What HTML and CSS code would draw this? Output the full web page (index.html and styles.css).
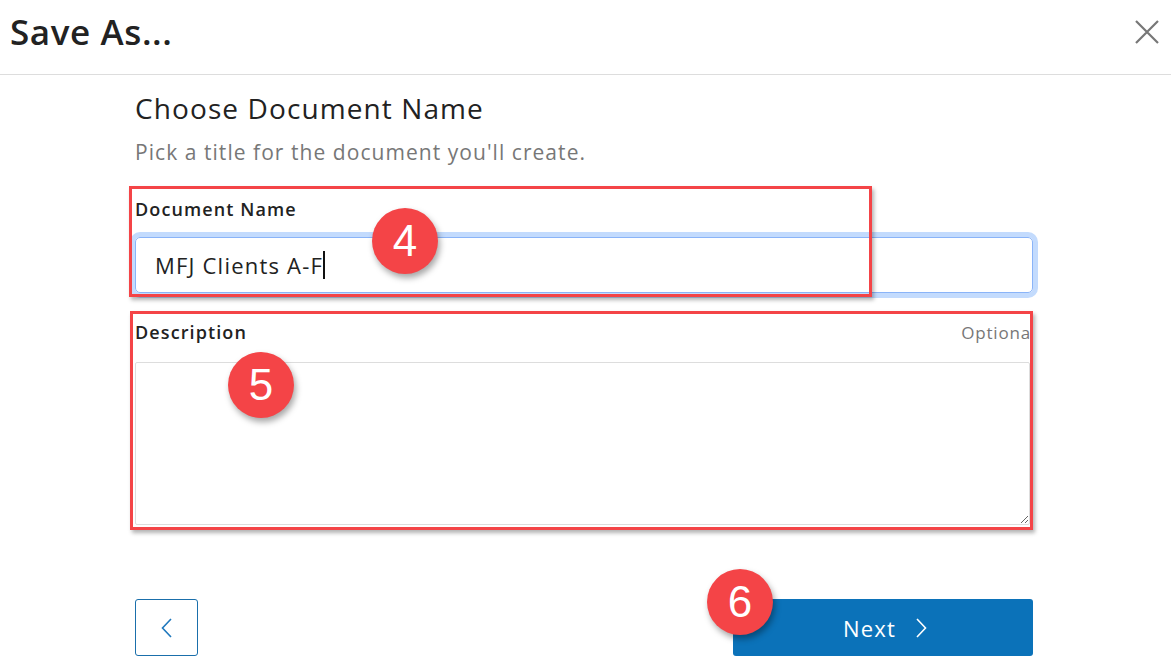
FILE: index.html
```html
<!DOCTYPE html>
<html>
<head>
  <title>Save As...</title>
  <link rel="stylesheet" href="styles.css">
</head>
<body>
  <div class="dialog">
    <div class="dialog-header">
      <h1>Save As...</h1>
      <button class="close-btn" aria-label="Close">
        <svg width="24" height="24" viewBox="0 0 24 24"><path d="M1 1 L23 23 M23 1 L1 23" stroke="#777" stroke-width="2.2" fill="none"/></svg>
      </button>
    </div>

    <div class="dialog-body">
      <h2>Choose Document Name</h2>
      <p class="subtitle">Pick a title for the document you'll create.</p>

      <div class="form-group">
        <label class="field-label">Document Name</label>
        <div class="text-input focused">MFJ Clients A-F<span class="caret"></span></div>
      </div>

      <div class="form-group desc-group">
        <div class="label-row">
          <label class="field-label">Description</label>
          <span class="optional">Optional</span>
        </div>
        <textarea class="text-area"></textarea>
      </div>

      <div class="actions">
        <button class="back-btn" aria-label="Back">
          <svg width="12" height="20" viewBox="0 0 12 20"><path d="M10 1 L1.5 10 L10 19" stroke="#1f78bd" stroke-width="1.6" fill="none"/></svg>
        </button>
        <button class="next-btn">Next
          <svg width="12" height="20" viewBox="0 0 12 20"><path d="M2 1 L10.5 10 L2 19" stroke="#fff" stroke-width="1.6" fill="none"/></svg>
        </button>
      </div>
    </div>
  </div>

  <!-- tutorial annotations -->
  <div class="mark mark-name"></div>
  <div class="mark mark-desc"></div>
  <div class="badge badge-4">4</div>
  <div class="badge badge-5">5</div>
  <div class="badge badge-6">6</div>
</body>
</html>
```

FILE: styles.css
```css
body {
  margin: 0;
  font-family: "Open Sans", sans-serif;
  color: #222;
  background-color: #fff;
}

.dialog-header {
  height: 75px;
  box-sizing: border-box;
  padding: 12px 12px 0 10px;
  border-bottom: 1px solid #ddd;
  display: flex;
  justify-content: space-between;
  align-items: flex-start;
}

.dialog-header h1 {
  margin: 0;
  font-size: 35px;
  line-height: 40px;
  font-weight: 600;
  letter-spacing: 0.6px;
  color: #222;
}

.close-btn {
  margin-top: 8px;
  padding: 0;
  border: none;
  background: none;
  display: flex;
}

.dialog-body {
  margin-left: 135px;
  width: 898px;
  padding-top: 16px;
}

.dialog-body h2 {
  margin: 0;
  font-size: 28px;
  line-height: 34px;
  font-weight: 500;
  letter-spacing: 1.1px;
  color: #222;
}

.subtitle {
  margin: 13px 0 0;
  font-size: 21px;
  line-height: 28px;
  letter-spacing: 1.05px;
  color: #777;
}

.form-group {
  margin-top: 32px;
}

.field-label {
  display: block;
  font-size: 18px;
  line-height: 22px;
  font-weight: 600;
  letter-spacing: 1.1px;
  color: #222;
}

.text-input {
  margin-top: 17px;
  height: 56px;
  box-sizing: border-box;
  padding-left: 19px;
  border: 1px solid #ccc;
  border-radius: 5px;
  display: flex;
  align-items: center;
  font-size: 22px;
  letter-spacing: 1.2px;
  color: #222;
}

.text-input.focused {
  border-color: #8ab4f8;
  box-shadow: 0 0 0 5px #c3dbfd;
}

.caret {
  display: inline-block;
  width: 2px;
  height: 28px;
  background-color: #111;
}

.desc-group {
  margin-top: 28px;
}

.label-row {
  display: flex;
  justify-content: space-between;
  align-items: baseline;
  width: 895px;
  overflow: hidden;
}

.optional {
  font-size: 17px;
  letter-spacing: 0.8px;
  color: #777;
  margin-right: -6px;
}

.text-area {
  display: block;
  margin-top: 18px;
  width: 895px;
  height: 163px;
  box-sizing: border-box;
  border: 1px solid #ddd;
  border-radius: 2px;
  font-family: "Open Sans", sans-serif;
  font-size: 18px;
}

.actions {
  margin-top: 74px;
  display: flex;
  justify-content: space-between;
}

.back-btn {
  width: 63px;
  height: 57px;
  border: 1px solid #1a6fab;
  border-radius: 3px;
  background-color: #fff;
  display: flex;
  align-items: center;
  justify-content: center;
  padding: 0;
}

.next-btn {
  width: 300px;
  height: 57px;
  border: none;
  border-radius: 3px;
  background-color: #0b72b9;
  color: #fff;
  font-family: "Open Sans", sans-serif;
  font-size: 22px;
  letter-spacing: 1.2px;
  display: flex;
  align-items: center;
  justify-content: center;
  gap: 19px;
  padding: 0 0 0 4px;
}

/* annotations */
.mark {
  position: absolute;
  border: 3px solid #f44447;
  box-sizing: border-box;
  box-shadow: 2px 3px 4px rgba(0, 0, 0, 0.3);
}

.mark-name {
  left: 129px;
  top: 186px;
  width: 743px;
  height: 111px;
}

.mark-desc {
  left: 130px;
  top: 311px;
  width: 903px;
  height: 219px;
}

.badge {
  position: absolute;
  width: 66px;
  height: 66px;
  border-radius: 50%;
  background-color: #f44447;
  color: #fff;
  font-family: "Liberation Sans", Arial, sans-serif;
  font-size: 44px;
  line-height: 66px;
  text-align: center;
  box-shadow: 2px 4px 6px rgba(0, 0, 0, 0.35);
}

.badge-4 {
  left: 372px;
  top: 208px;
}

.badge-5 {
  left: 228px;
  top: 352px;
}

.badge-6 {
  left: 707px;
  top: 569px;
}
```
